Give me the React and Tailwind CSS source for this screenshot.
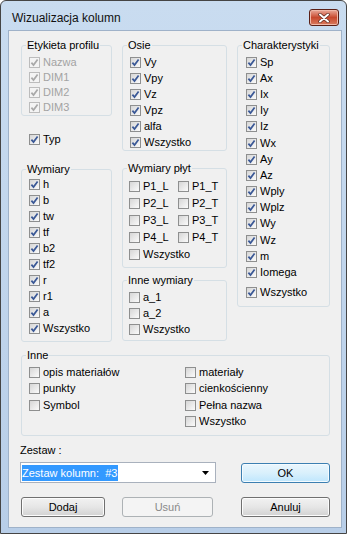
import React from 'react';
import clsx from 'clsx';

// Win7-style checkbox row
const Check = ({ label, checked = true, disabled = false, className = 'h-[16px]' }) => (
  <div className={clsx('flex items-center gap-[3px] whitespace-nowrap', className)}>
    <span
      className={clsx(
        'w-[11px] h-[11px] border flex items-center justify-center shrink-0',
        disabled
          ? 'border-[#bcbcbc] bg-[#f4f4f4]'
          : 'border-[#8e8f8f] bg-linear-to-br from-[#d6d6d6] to-[#fbfbfb]'
      )}
    >
      {checked && (
        <svg width="9" height="9" viewBox="0 0 9 9">
          <path
            d="M1.4 4.6 L3.5 7.1 L7.6 1.4"
            fill="none"
            stroke={disabled ? '#a9a9a9' : '#3a5896'}
            strokeWidth="1.7"
          />
        </svg>
      )}
    </span>
    <span className={disabled ? 'text-[#a3a3a3]' : 'text-black'}>{label}</span>
  </div>
);

const Group = ({ title, className, children }) => (
  <fieldset className={clsx('border border-[#d5dfe5] rounded-[3px]', className)}>
    <legend className="ml-[4px] px-[1px] leading-[13px] text-black">{title}</legend>
    {children}
  </fieldset>
);

const Button = ({ children, className, disabled, primary }) => (
  <button
    className={clsx(
      'h-[20px] rounded-[3px] border text-[11px] leading-[13px]',
      disabled
        ? 'border-[#adb2b5] bg-[#f4f4f4] text-[#8a8a8a]'
        : primary
          ? 'border-[#3c7fb1] bg-linear-to-b from-[#eaf6fd] via-[#d9f0fc] to-[#bee6fd] text-black shadow-[inset_0_0_0_1px_#f4fbff]'
          : 'border-[#707070] bg-linear-to-b from-[#f2f2f2] via-[#e6e6e6] to-[#d2d2d2] text-black shadow-[inset_0_0_0_1px_#fcfcfc]',
      className
    )}
  >
    {children}
  </button>
);

export default function App() {
  const osie = ['Vy', 'Vpy', 'Vz', 'Vpz', 'alfa', 'Wszystko'];
  const charakterystyki = ['Sp', 'Ax', 'Ix', 'Iy', 'Iz', 'Wx', 'Ay', 'Az', 'Wply', 'Wplz', 'Wy', 'Wz', 'm', 'Iomega'];
  const wymiary = ['h', 'b', 'tw', 'tf', 'b2', 'tf2', 'r', 'r1', 'a', 'Wszystko'];
  const plyty = ['P1', 'P2', 'P3', 'P4'];

  return (
    <div className="w-[349px] h-[535px] bg-white font-['Liberation_Sans',Arial,sans-serif] text-[11px] leading-[13px]">
      <div className="w-[347px] h-[534px] rounded-t-[6px] border border-[#454545] bg-linear-to-b from-[#c9dcf0] to-[#b8cee8] flex flex-col">
        {/* title bar */}
        <div className="h-[29px] flex items-start justify-between pl-[11px] pr-[7px]">
          <span className="mt-[10px] text-[12px] leading-[15px] text-[#111]">Wizualizacja kolumn</span>
          <div className="mt-[8px] w-[30px] h-[17px] rounded-[3px] border border-[#5b2016] bg-linear-to-b from-[#e9a99a] via-[#c7482d] to-[#d87a5e] flex items-center justify-center shadow-[inset_0_0_0_1px_#f0b8a8]">
            <svg width="12" height="10" viewBox="0 0 12 10">
              <path d="M2 1.5 L10 8.5 M10 1.5 L2 8.5" stroke="#5a2a20" strokeWidth="3.4" strokeLinecap="round" />
              <path d="M2 1.5 L10 8.5 M10 1.5 L2 8.5" stroke="#ffffff" strokeWidth="2" strokeLinecap="round" />
            </svg>
          </div>
        </div>

        {/* client area */}
        <div className="ml-[7px] w-[334px] h-[498px] border border-[#9fb2c9] bg-[#f0f0f0] pl-[12px] pt-[8px] flex flex-col">
          <div className="flex gap-[10px] items-start">
            {/* column 1 */}
            <div className="w-[91px] flex flex-col">
              <Group title="Etykieta profilu">
                <div className="pl-[7px] pt-[3px]">
                  {['Nazwa', 'DIM1', 'DIM2', 'DIM3'].map((l) => (
                    <Check key={l} label={l} disabled className="h-[15px]" />
                  ))}
                </div>
              </Group>
              <div className="pl-[8px] mt-[16px]">
                <Check label="Typ" className="h-[15px]" />
              </div>
              <Group title="Wymiary" className="mt-[16px]">
                <div className="pl-[7px] pb-[5px]">
                  {wymiary.map((l) => (
                    <Check key={l} label={l} />
                  ))}
                </div>
              </Group>
            </div>

            {/* column 2 */}
            <div className="w-[105px] flex flex-col">
              <Group title="Osie">
                <div className="pl-[7px] pt-[2px]">
                  {osie.map((l) => (
                    <Check key={l} label={l} />
                  ))}
                </div>
              </Group>
              <Group title="Wymiary płyt" className="mt-[11px]">
                <div className="pl-[6px] pt-[3px] pb-[4px]">
                  {plyty.map((p) => (
                    <div key={p} className="grid grid-cols-[49px_1fr]">
                      <Check label={`${p}_L`} checked={false} className="h-[17px]" />
                      <Check label={`${p}_T`} checked={false} className="h-[17px]" />
                    </div>
                  ))}
                  <Check label="Wszystko" checked={false} className="h-[17px]" />
                </div>
              </Group>
              <Group title="Inne wymiary" className="mt-[6px]">
                <div className="pl-[6px] pt-[2px] pb-[3px]">
                  {['a_1', 'a_2', 'Wszystko'].map((l) => (
                    <Check key={l} label={l} checked={false} />
                  ))}
                </div>
              </Group>
            </div>

            {/* column 3 */}
            <div className="w-[93px] flex flex-col">
              <Group title="Charakterystyki">
                <div className="pl-[8px] pt-[2px] pb-[5px]">
                  {charakterystyki.map((l) => (
                    <Check key={l} label={l} className="h-[16.2px]" />
                  ))}
                  <Check label="Wszystko" className="h-[16.2px] mt-[4px]" />
                </div>
              </Group>
            </div>
          </div>

          {/* Inne */}
          <Group title="Inne" className="w-[309px] mt-[7px]">
            <div className="grid grid-cols-[156px_1fr] pl-[7px] pt-[2px] pb-[5px]">
              <div>
                {['opis materiałów', 'punkty', 'Symbol'].map((l) => (
                  <Check key={l} label={l} checked={false} className="h-[16.5px]" />
                ))}
              </div>
              <div>
                {['materiały', 'cienkościenny', 'Pełna nazwa', 'Wszystko'].map((l) => (
                  <Check key={l} label={l} checked={false} className="h-[16.5px]" />
                ))}
              </div>
            </div>
          </Group>

          {/* Zestaw */}
          <div className="mt-[8px] -ml-[1px] text-black">Zestaw :</div>
          <div className="mt-[5px] -ml-[1px] flex items-start">
            <div className="w-[196px] h-[21px] border border-[#a9b1bd] bg-white flex items-center pl-[1px] pr-[5px]">
              <span className="bg-[#3399ff] text-white whitespace-pre h-[16px] leading-[16px] pr-[1px]">Zestaw kolumn:  #3</span>
              <div className="flex-1" />
              <svg width="7" height="4" viewBox="0 0 7 4" className="mr-[1px]">
                <path d="M0 0 H7 L3.5 4 Z" fill="#000" />
              </svg>
            </div>
            <Button primary className="ml-[25px] mt-[1px] w-[89px]">OK</Button>
          </div>

          <div className="mt-[14px] flex">
            <Button className="w-[84px]">Dodaj</Button>
            <Button disabled className="ml-[17px] w-[91px]">Usuń</Button>
            <Button className="ml-[28px] w-[89px]">Anuluj</Button>
          </div>
        </div>
      </div>
    </div>
  );
}
